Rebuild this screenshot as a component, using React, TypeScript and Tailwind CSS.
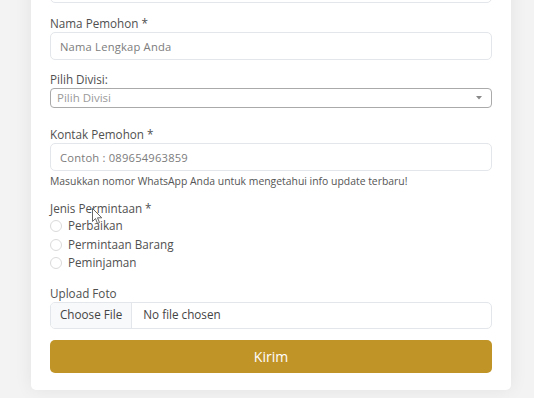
import React from 'react';

const labelCls = "block text-[11.7px] leading-[18px] text-[#505050]";
const inputCls =
  "block w-full h-[28px] rounded-[5px] border border-[#e3e6ea] bg-white px-[9px] text-[11.2px] tracking-[0.2px] text-[#444] placeholder:text-[#7c7c7c] outline-none";

const jenisOptions = ['Perbaikan', 'Permintaan Barang', 'Peminjaman'];

export default function App() {
  return (
    <div className="relative min-h-[398px] overflow-hidden bg-[#f3f3f3] font-['Open_Sans',sans-serif]">
      <div className="ml-[31px] -mt-[25px] w-[480px] rounded-[5px] bg-white px-[19px] pb-[17px] shadow-[0_0_18px_rgba(0,0,0,0.07)]">
        <input readOnly className={inputCls} />

        <label className={`${labelCls} mt-[11px]`}>Nama Pemohon *</label>
        <input readOnly className={inputCls} placeholder="Nama Lengkap Anda" />

        <label className={`${labelCls} mt-[10px]`}>Pilih Divisi:</label>
        <div className="flex h-[20px] items-center justify-between rounded-[4px] border border-[#aaaaaa] pl-[6px] pr-[9px]">
          <span className="text-[11.5px] text-[#9a9a9a]">Pilih Divisi</span>
          <svg width="6" height="4" viewBox="0 0 6 4">
            <path d="M0 0 L6 0 L3 3.5 Z" fill="#888" />
          </svg>
        </div>

        <label className={`${labelCls} mt-[17px]`}>Kontak Pemohon *</label>
        <input readOnly className={inputCls} placeholder="Contoh : 089654963859" />
        <p className="mt-[3px] text-[10.4px] leading-[15px] text-[#555]">
          Masukkan nomor WhatsApp Anda untuk mengetahui info update terbaru!
        </p>

        <label className={`${labelCls} mt-[10px]`}>Jenis Permintaan *</label>
        <div className="flex flex-col">
          {jenisOptions.map((opt) => (
            <div key={opt} className="flex h-[18.5px] items-center">
              <span className="h-[12px] w-[12px] rounded-full border border-[#dadada] bg-white" />
              <span className="ml-[6px] text-[11.7px] text-[#505050]">{opt}</span>
            </div>
          ))}
        </div>

        <label className={`${labelCls} mt-[11px]`}>Upload Foto</label>
        <div className="flex h-[27px] overflow-hidden rounded-[5px] border border-[#e3e6ea] text-[11.7px] text-[#444]">
          <div className="flex items-center border-r border-[#e3e6ea] bg-[#f8f9fa] px-[9px]">Choose File</div>
          <div className="flex items-center px-[11px]">No file chosen</div>
        </div>

        <button className="mt-[11px] flex h-[33px] w-full items-center justify-center rounded-[5px] bg-[#c19428] text-[14px] font-medium text-white">
          Kirim
        </button>
      </div>

      <svg className="absolute left-[92px] top-[208px]" width="11" height="17" viewBox="0 0 11 17">
        <path d="M0.5 0.5 L0.5 13.5 L3.5 10.5 L5.5 15.5 L7.5 14.5 L5.5 9.8 L9.8 9.8 Z" fill="white" stroke="#555" strokeWidth="0.9" strokeLinejoin="round" />
      </svg>
    </div>
  );
}
